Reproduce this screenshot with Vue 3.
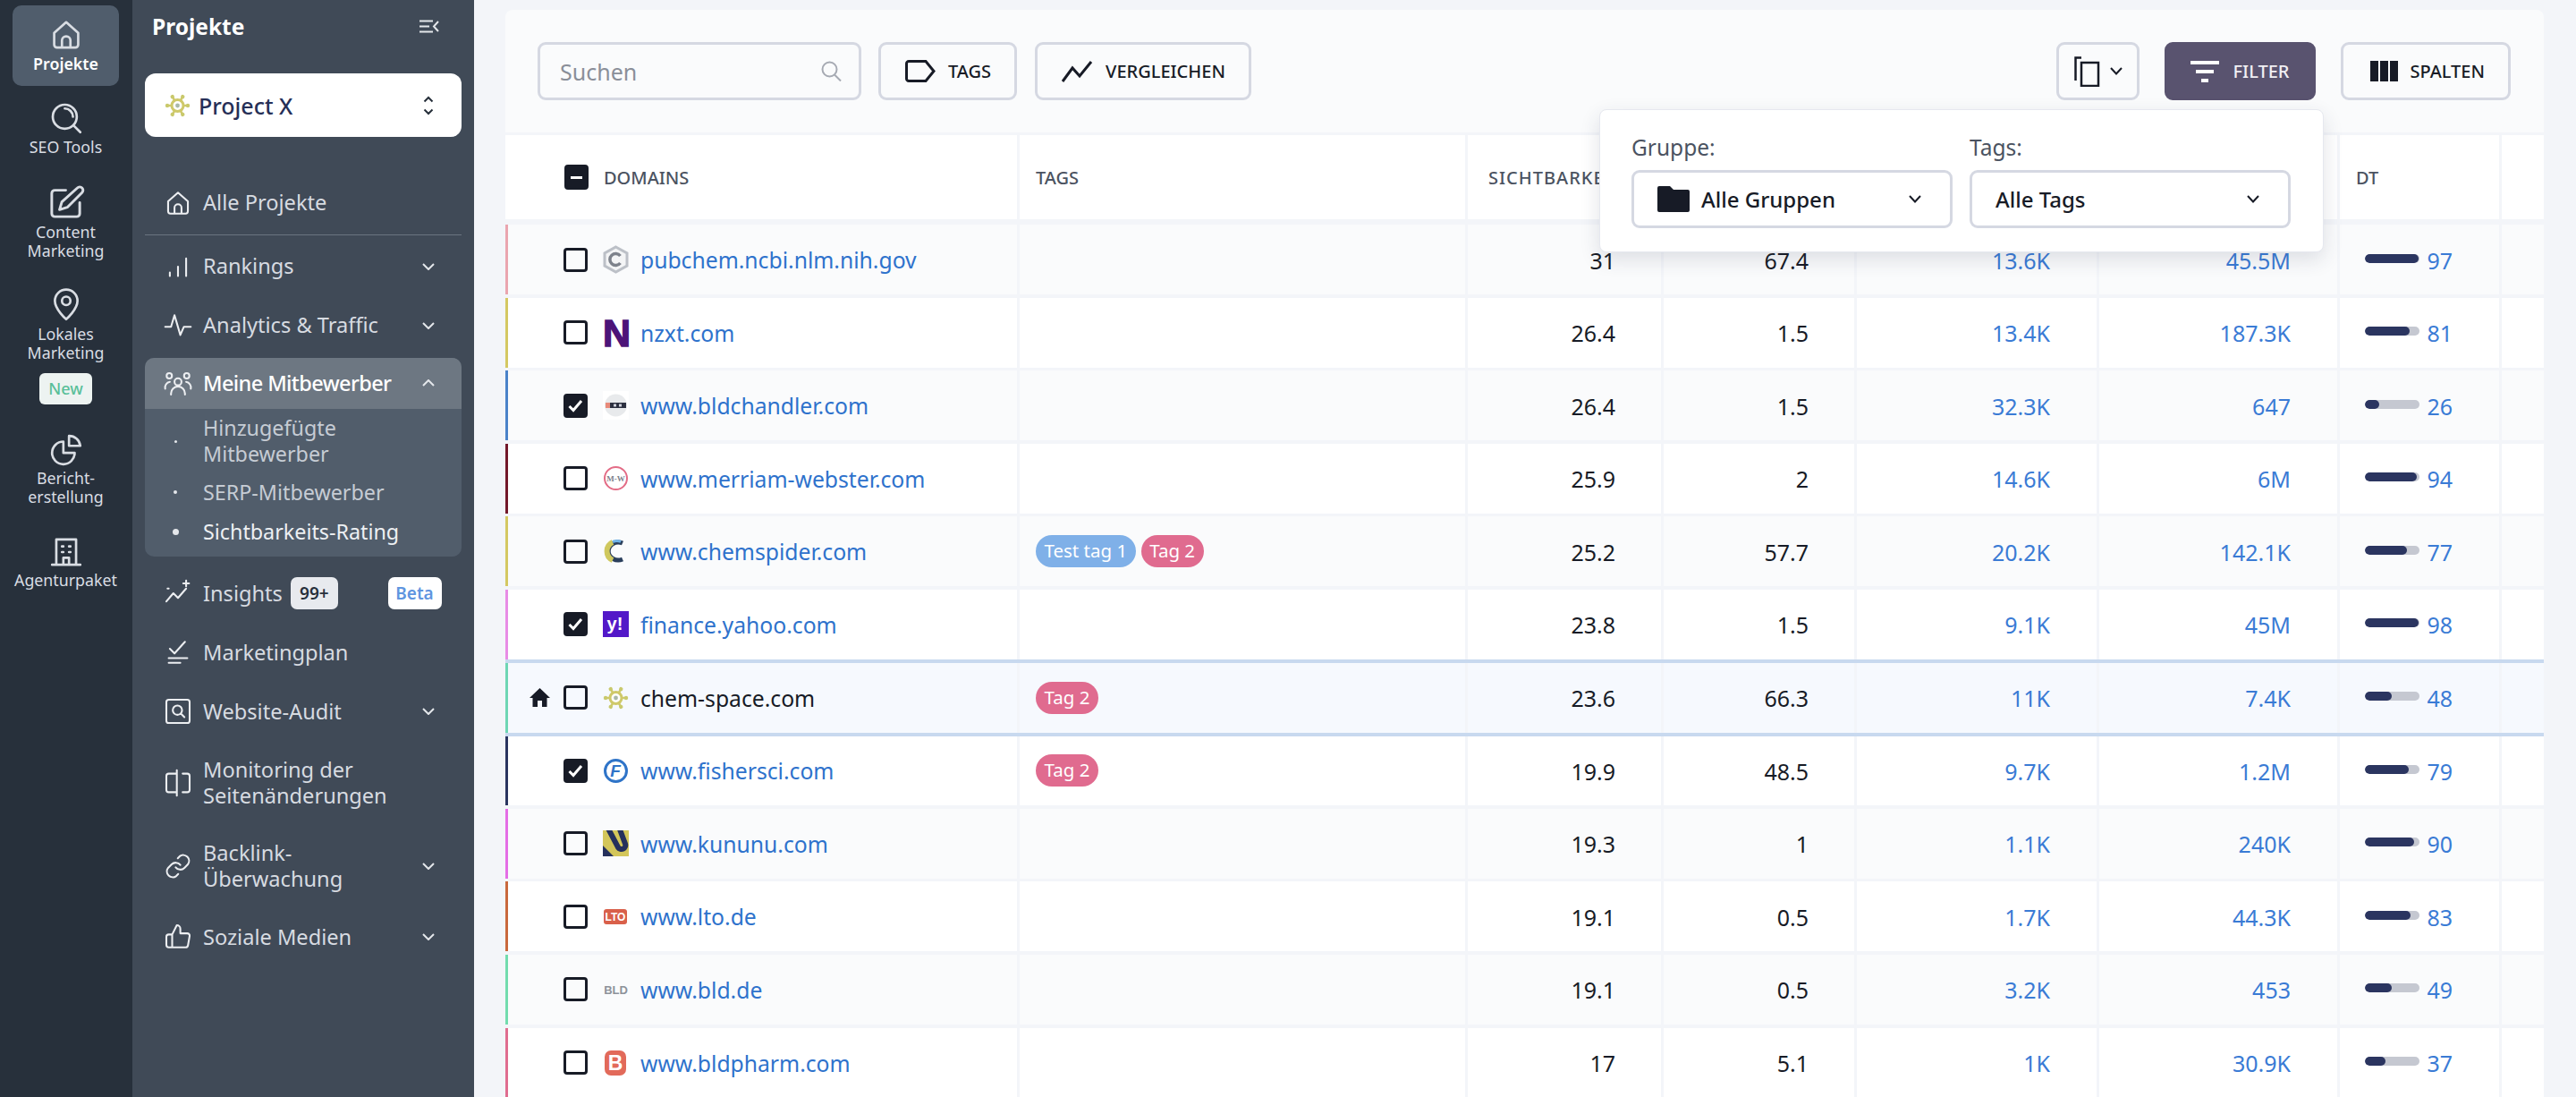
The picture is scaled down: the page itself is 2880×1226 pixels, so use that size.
<script setup>
const rail = [
  { label: ['Projekte'], active: true, d: 'M3.5 10.5 12 3l8.5 7.5V19a2 2 0 0 1-2 2h-13a2 2 0 0 1-2-2zM9 21v-5a3 3 0 0 1 6 0v5' },
  { label: ['SEO Tools'], d: 'M11 2.5a8.5 8.5 0 1 0 0 17 8.5 8.5 0 0 0 0-17zM11 5.2a5.8 5.8 0 0 1 5.8 5.8M17 17l5 5' },
  { label: ['Content', 'Marketing'], tall: true, d: 'M12 4H5a2 2 0 0 0-2 2v13a2 2 0 0 0 2 2h14a2 2 0 0 0 2-2v-7M19.5 2.5a2.1 2.1 0 0 1 3 3L13 15l-5 1.5 1.5-5z' },
  { label: ['Lokales', 'Marketing'], badge: 'New', d: 'M12 22s-8-7-8-13a8 8 0 0 1 16 0c0 6-8 13-8 13zM12 6a3 3 0 1 0 0 6 3 3 0 0 0 0-6z' },
  { label: ['Bericht-', 'erstellung'], d: 'M10 6a8 8 0 1 0 8 8h-8zM14 2v7h8a8 8 0 0 0-8-7z' },
  { label: ['Agenturpaket'], d: 'M5 21V3h14v18M2 21h20M9 8h1M14 8h1M9 12h1M14 12h1M10 21v-5h4v5' }
]
const navTop = [
  { label: ['Rankings'], chev: true, d: 'M5 20v-3M12 20v-8M19 20V5' },
  { label: ['Analytics & Traffic'], chev: true, d: 'M1 13h5l3-10 5 17 3-7h6' }
]
const sub = [
  { label: ['Hinzugefügte', 'Mitbewerber'], dot: 'small' },
  { label: ['SERP-Mitbewerber'], dot: 'mid' },
  { label: ['Sichtbarkeits-Rating'], dot: 'big', on: true }
]
const navBottom = [
  { label: ['Insights'], insights: true, d: 'M2 19l6-7 4 4 7-8M19 1v5M16.5 3.5h5M3 8h1' },
  { label: ['Marketingplan'], d: 'M5 9l4 4 9-10M4 17h16M4 21h10' },
  { label: ['Website-Audit'], chev: true, d: 'M4 2h16a2 2 0 0 1 2 2v16a2 2 0 0 1-2 2H4a2 2 0 0 1-2-2V4a2 2 0 0 1 2-2zM11.5 7a4 4 0 1 0 0 8 4 4 0 0 0 0-8zM14.5 14l3 3' },
  { label: ['Monitoring der', 'Seitenänderungen'], d: 'M11 1v22M11 4H4a2 2 0 0 0-2 2v12a2 2 0 0 0 2 2h7M16 4h4a2 2 0 0 1 2 2v12a2 2 0 0 1-2 2h-4' },
  { label: ['Backlink-', 'Überwachung'], chev: true, d: 'M10 13a5 5 0 0 0 7.5.5l3-3a5 5 0 0 0-7-7l-1.7 1.7M14 11a5 5 0 0 0-7.5-.5l-3 3a5 5 0 0 0 7 7l1.7-1.7' },
  { label: ['Soziale Medien'], chev: true, d: 'M7 10v11M2 12a2 2 0 0 1 2-2h3l4-8a3 3 0 0 1 3 3v4h6a2 2 0 0 1 2 2.3l-1.4 8a2 2 0 0 1-2 1.7H4a2 2 0 0 1-2-2z' }
]
const usersIcon = 'M12 8a3 3 0 1 0 0 6 3 3 0 0 0 0-6zM6 22v-1a6 6 0 0 1 12 0v1M4.5 3.5a2.3 2.3 0 1 0 0 4.6 2.3 2.3 0 0 0 0-4.6zM19.5 3.5a2.3 2.3 0 1 0 0 4.6 2.3 2.3 0 0 0 0-4.6zM1 17a5 5 0 0 1 4-6M23 17a5 5 0 0 0-4-6'
const rows = [
  { domain: 'pubchem.ncbi.nlm.nih.gov', logo: 'hex', bar: '#eaa5af', a: '31', b: '67.4', c: '13.6K', d: '45.5M', dt: 97 },
  { domain: 'nzxt.com', logo: 'n', bar: '#d4c862', a: '26.4', b: '1.5', c: '13.4K', d: '187.3K', dt: 81 },
  { domain: 'www.bldchandler.com', logo: 'bldc', bar: '#4a82c9', a: '26.4', b: '1.5', c: '32.3K', d: '647', dt: 26, checked: true },
  { domain: 'www.merriam-webster.com', logo: 'mw', bar: '#73182a', a: '25.9', b: '2', c: '14.6K', d: '6M', dt: 94 },
  { domain: 'www.chemspider.com', logo: 'cs', bar: '#d4c862', a: '25.2', b: '57.7', c: '20.2K', d: '142.1K', dt: 77, tags: ['t1', 't2'] },
  { domain: 'finance.yahoo.com', logo: 'y', bar: '#e88ce6', a: '23.8', b: '1.5', c: '9.1K', d: '45M', dt: 98, checked: true },
  { domain: 'chem-space.com', logo: 'chem', bar: '#6ed6b4', a: '23.6', b: '66.3', c: '11K', d: '7.4K', dt: 48, own: true, tags: ['t2'] },
  { domain: 'www.fishersci.com', logo: 'f', bar: '#2a3560', a: '19.9', b: '48.5', c: '9.7K', d: '1.2M', dt: 79, checked: true, tags: ['t2'] },
  { domain: 'www.kununu.com', logo: 'k', bar: '#e46de6', a: '19.3', b: '1', c: '1.1K', d: '240K', dt: 90 },
  { domain: 'www.lto.de', logo: 'lto', bar: '#c9683c', a: '19.1', b: '0.5', c: '1.7K', d: '44.3K', dt: 83 },
  { domain: 'www.bld.de', logo: 'bld', bar: '#72dcae', a: '19.1', b: '0.5', c: '3.2K', d: '453', dt: 49 },
  { domain: 'www.bldpharm.com', logo: 'b', bar: '#e06d90', a: '17', b: '5.1', c: '1K', d: '30.9K', dt: 37 }
]
const spokes = [0, 60, 120, 180, 240, 300]
</script>

<template>
  <div class="page">
    <aside class="rail">
      <div v-for="r in rail" :key="r.label[0]" class="rail-item" :class="{ active: r.active }">
        <svg class="rail-icon" :class="{ tall: r.tall }" viewBox="2.5 2.5 19 19"><path :d="r.d" /></svg>
        <span v-for="l in r.label" :key="l" class="rail-label">{{ l }}</span>
        <span v-if="r.badge" class="new">{{ r.badge }}</span>
      </div>
    </aside>

    <aside class="panel">
      <div class="panel-head">
        <span class="panel-title">Projekte</span>
        <svg class="collapse" viewBox="0 0 22 15"><path d="M0 1.5h15M0 7.5h11M0 13.5h15M21 2l-5 5.5 5 5.5" /></svg>
      </div>
      <div class="project">
        <svg class="project-logo" viewBox="0 0 29 26">
          <g v-for="s in spokes" :key="s" :transform="`rotate(${s} 14.5 13)`">
            <path class="spoke" d="M14.5 13H25" />
            <circle class="tip" cx="26" cy="13" r="2.2" />
          </g>
          <circle class="hub" cx="14.5" cy="13" r="6.5" />
          <circle class="hub-dot" cx="14.5" cy="13" r="2.4" />
        </svg>
        <span class="project-name">Project X</span>
        <svg class="updown" viewBox="0 0 12 22"><path d="M1.5 6.5 6 2l4.5 4.5M1.5 15.5 6 20l4.5-4.5" /></svg>
      </div>

      <div class="nav-row first">
        <svg class="nav-icon" viewBox="2 2 20 20"><path :d="rail[0].d" /></svg>
        <span class="nav-text">Alle Projekte</span>
      </div>
      <div class="divider"></div>

      <div v-for="n in navTop" :key="n.label[0]" class="nav-row">
        <svg class="nav-icon" viewBox="2 2 20 20"><path :d="n.d" /></svg>
        <span class="nav-text">{{ n.label[0] }}</span>
        <svg class="chev" viewBox="0 0 14 8"><path d="M1 1l6 6 6-6" /></svg>
      </div>

      <div class="group">
        <div class="group-head">
          <svg class="nav-icon" viewBox="2 2 20 20"><path :d="usersIcon" /></svg>
          <span class="nav-text strong">Meine Mitbewerber</span>
          <svg class="chev" viewBox="0 0 14 8"><path d="M1 7l6-6 6 6" /></svg>
        </div>
        <div class="group-list">
          <div v-for="s in sub" :key="s.label[0]" class="sub-row" :class="{ on: s.on }">
            <span class="dot-slot"><span class="dot" :class="s.dot"></span></span>
            <span class="sub-text"><span v-for="l in s.label" :key="l" class="line">{{ l }}</span></span>
          </div>
        </div>
      </div>

      <div class="nav-bottom">
        <div v-for="n in navBottom" :key="n.label[0]" class="nav-row" :class="{ double: n.label.length > 1 }">
          <svg class="nav-icon" viewBox="2 2 20 20"><path :d="n.d" /></svg>
          <span class="nav-text"><span v-for="l in n.label" :key="l" class="line">{{ l }}</span></span>
          <span v-if="n.insights" class="count">99+</span>
          <span v-if="n.insights" class="beta">Beta</span>
          <svg v-if="n.chev" class="chev" viewBox="0 0 14 8"><path d="M1 1l6 6 6-6" /></svg>
        </div>
      </div>
    </aside>

    <main class="main">
      <div class="card">
        <div class="toolbar">
          <div class="search">
            <span class="search-text">Suchen</span>
            <svg class="search-icon" viewBox="0 0 23 23"><path d="M9.5 1.5a8 8 0 1 0 0 16 8 8 0 0 0 0-16zM15 15.5l7 7" /></svg>
          </div>
          <div class="btn tag-btn">
            <svg class="ico-tag" viewBox="0 0 34 25"><path d="M4 1.5h19l9 11-9 11H4a2.5 2.5 0 0 1-2.5-2.5V4A2.5 2.5 0 0 1 4 1.5z" /></svg>
            <span>TAGS</span>
          </div>
          <div class="btn">
            <svg class="ico-cmp" viewBox="0 0 35 24"><path d="M1 23 12 8l8 9L33 1" /></svg>
            <span>VERGLEICHEN</span>
          </div>
          <div class="tool-right">
            <div class="btn copy">
              <svg class="ico-copy" viewBox="0 0 30 34"><path d="M9 33h19V7H9zM9 1.500H2.500V27" /></svg>
              <svg class="ico-down" viewBox="0 0 14 9"><path d="M1 1l6 6.500L13 1" /></svg>
            </div>
            <div class="btn filter">
              <span class="ico-filter"><i class="f1"></i><i class="f2"></i><i class="f3"></i></span>
              <span>FILTER</span>
            </div>
            <div class="btn cols">
              <span class="ico-cols"><i></i><i></i><i></i></span>
              <span>SPALTEN</span>
            </div>
          </div>
        </div>

        <div class="grid head">
          <div class="cell head-domain">
            <span class="cb minus"><i></i></span>
            <span class="h-text">DOMAINS</span>
          </div>
          <div class="cell head-pad"><span class="h-text">TAGS</span></div>
          <div class="cell head-wide"><span class="h-text spaced">SICHTBARKEIT</span></div>
          <div class="cell"></div>
          <div class="cell"></div>
          <div class="cell"></div>
          <div class="cell head-pad"><span class="h-text">DT</span></div>
          <div class="cell"></div>
        </div>

        <div class="rows">
          <div v-for="(r, i) in rows" :key="r.domain" class="grid row" :class="{ odd: i % 2 === 0, own: r.own }">
            <div class="cell domain" :style="{ borderLeftColor: r.bar }">
              <span class="home-slot">
                <svg v-if="r.own" class="home" viewBox="0 0 23 21"><path d="M11.500 0 23 11h-3.500v10h-5.500v-7H9v7H3.500V11H0z" /></svg>
              </span>
              <span class="cb" :class="{ checked: r.checked }">
                <svg v-if="r.checked" viewBox="0 0 21 21"><path d="M3.500 11l4.500 4.500L17 5" /></svg>
              </span>
              <span class="logo">
                <svg v-if="r.logo === 'hex'" viewBox="0 0 29 32"><path d="M14.500 2 27 9v14l-12.500 7L2 23V9z" fill="#f4f5f6" stroke="#bcc0c7" stroke-width="3" /><path d="M19.500 12a6.500 6.500 0 1 0 0 8" fill="none" stroke="#7d828b" stroke-width="3.500" /></svg>
                <span v-else-if="r.logo === 'n'" class="n-mark">N</span>
                <svg v-else-if="r.logo === 'bldc'" viewBox="0 0 29 32"><rect width="29" height="32" fill="#fff" /><circle cx="14.500" cy="16" r="12.500" fill="#e8eaec" /><rect x="3" y="13" width="5" height="6" fill="#e88a7a" /><rect x="8" y="13" width="18" height="6" fill="#2c3040" /><rect x="12" y="14.500" width="3" height="3" fill="#cfd2dc" /><rect x="18" y="14.500" width="3" height="3" fill="#cfd2dc" /></svg>
                <svg v-else-if="r.logo === 'mw'" viewBox="0 0 29 32"><circle cx="14.500" cy="15.500" r="12.500" fill="#fff" stroke="#e36c86" stroke-width="2" /><text class="mw-letter" x="14.500" y="18.500">M-W</text></svg>
                <svg v-else-if="r.logo === 'cs'" viewBox="0 0 29 32"><path d="M22 7a11 10 0 1 0 0 18" fill="none" stroke="#2a3f5c" stroke-width="5" /><path d="M11 6a11 11 0 0 0 0 20" fill="none" stroke="#cfc85e" stroke-width="6" /><path d="M11 5.500q5-2 9 0" fill="none" stroke="#6fb3e8" stroke-width="3" /></svg>
                <svg v-else-if="r.logo === 'y'" viewBox="0 0 29 29"><rect width="29" height="29" fill="#5318c8" /><text class="y-letter" x="13.500" y="21">y!</text></svg>
                <svg v-else-if="r.logo === 'chem'" viewBox="0 0 29 26">
                  <g v-for="s in spokes" :key="s" :transform="`rotate(${s} 14.500 13)`">
                    <path class="spoke" d="M14.500 13H25" />
                    <circle class="tip" cx="26" cy="13" r="2.200" />
                  </g>
                  <circle class="hub" cx="14.500" cy="13" r="6.500" />
                  <circle class="hub-dot" cx="14.500" cy="13" r="2.400" />
                </svg>
                <svg v-else-if="r.logo === 'f'" viewBox="0 0 29 29"><circle cx="14.500" cy="14.500" r="12" fill="#fff" stroke="#2f74c8" stroke-width="3" /><text class="f-letter" x="14" y="21">F</text></svg>
                <svg v-else-if="r.logo === 'k'" viewBox="0 0 29 29"><rect width="29" height="29" fill="#d3c65a" /><path d="M0 17 12 29H0z" fill="#25305c" /><path d="M6-2l11 21a4.500 4.500 0 0 0 8-4L19-1" fill="none" stroke="#25305c" stroke-width="6" /></svg>
                <svg v-else-if="r.logo === 'lto'" viewBox="0 0 29 19"><rect x="1" y="1" width="26" height="17" rx="3" fill="#d9604a" /><text class="lto-letter" x="14" y="14">LTO</text></svg>
                <svg v-else-if="r.logo === 'bld'" viewBox="0 0 29 14"><text class="bld-letter" x="14.500" y="12">BLD</text></svg>
                <svg v-else viewBox="0 0 29 30"><rect x="2" y="1" width="24" height="28" rx="7" fill="#e26a5a" /><text class="b-letter" x="14" y="23">B</text></svg>
              </span>
              <span class="dom" :class="{ dark: r.own }">{{ r.domain }}</span>
            </div>
            <div class="cell tags">
              <template v-for="t in r.tags" :key="t">
                <span v-if="t === 't1'" class="tag blue">Test tag 1</span>
                <span v-else class="tag pink">Tag 2</span>
              </template>
            </div>
            <div class="cell num plain">{{ r.a }}</div>
            <div class="cell num plain">{{ r.b }}</div>
            <div class="cell num link">{{ r.c }}</div>
            <div class="cell num link">{{ r.d }}</div>
            <div class="cell num link dt">
              <span class="track"><span class="fill" :style="{ width: r.dt + '%' }"></span></span>
              <span>{{ r.dt }}</span>
            </div>
            <div class="cell"></div>
          </div>
        </div>

        <div class="popover">
          <div class="pop-col">
            <span class="pop-label">Gruppe:</span>
            <div class="select">
              <svg class="folder" viewBox="0 0 36 29"><path d="M2 0h12l4 4h16a2 2 0 0 1 2 2v21a2 2 0 0 1-2 2H2a2 2 0 0 1-2-2V2a2 2 0 0 1 2-2z" /></svg>
              <span class="sel-text">Alle Gruppen</span>
              <svg class="ico-down sel-down" viewBox="0 0 14 9"><path d="M1 1l6 6.500L13 1" /></svg>
            </div>
          </div>
          <div class="pop-col">
            <span class="pop-label">Tags:</span>
            <div class="select">
              <span class="sel-text">Alle Tags</span>
              <svg class="ico-down sel-down" viewBox="0 0 14 9"><path d="M1 1l6 6.500L13 1" /></svg>
            </div>
          </div>
        </div>
      </div>
    </main>
  </div>
</template>

<style>
html, body { margin: 0; height: 1226px; overflow: hidden; background: #f3f5f9; }
</style>

<style scoped>
.page { display: flex; height: 1226px; overflow: hidden; font-family: "Noto Sans", "Open Sans", sans-serif; color: #171b26; background: #f3f5f9; }

/* rail */
.rail { width: 148px; flex: none; background: #27303b; display: flex; flex-direction: column; gap: 3px; padding: 6px 15px 0 14px; box-sizing: border-box; }
.rail-item { display: flex; flex-direction: column; align-items: center; padding: 18px 0 14.5px; border-radius: 10px; }
.rail-item.active { background: #505d6c; }
.rail-icon { width: 30px; height: 30px; margin-bottom: 6.5px; overflow: visible; fill: none; stroke: #d9dde3; stroke-width: 1.700; stroke-linecap: round; stroke-linejoin: round; }
.rail-icon.tall { height: 33px; margin-bottom: 5.500px; width: 33px; }
.rail-label { font-size: 17.800px; line-height: 21px; color: #d9dde3; white-space: nowrap; }
.active .rail-label { color: #fff; font-weight: 600; }
.new { margin-top: 12.500px; width: 59px; height: 35px; border-radius: 6px; background: #edf3f1; color: #59bf99; font-size: 18px; line-height: 35px; text-align: center; font-weight: 500; }

/* panel */
.panel { width: 382px; flex: none; background: #404a57; box-sizing: border-box; padding: 0 14.500px 0 14px; }
.panel-head { height: 58px; display: flex; align-items: center; justify-content: space-between; padding: 0 25px 0 8px; }
.panel-title { font-size: 24.500px; font-weight: 700; color: #fff; }
.collapse { width: 22px; height: 15px; fill: none; stroke: #e4e7eb; stroke-width: 2; }
.project { margin-top: 24px; height: 71px; background: #fff; border-radius: 12px; display: flex; align-items: center; padding: 0 31px 0 22px; }
.project-logo { width: 29px; height: 26px; flex: none; }
.spoke { stroke: #cfc96a; stroke-width: 2.500; }
.tip { fill: #c9c96c; }
.hub { fill: #fff; stroke: #cfc96a; stroke-width: 3; }
.hub-dot { fill: #a9b8a8; }
.project-name { margin-left: 9px; font-size: 25px; font-weight: 500; color: #262f57; flex: 1; }
.updown { width: 12px; height: 22px; fill: none; stroke: #262f3a; stroke-width: 2; }
.nav-row { display: flex; align-items: center; min-height: 66px; padding: 0 30px 0 24px; box-sizing: border-box; }
.nav-row.first { margin-top: 40.500px; }
.nav-row.double { padding-top: 17.500px; padding-bottom: 17.500px; }
.divider { height: 1px; background: #6a7480; margin: 2px 0 2px; }
.nav-icon { width: 26px; height: 26px; flex: none; margin-right: 15px; overflow: visible; fill: none; stroke: #eceef1; stroke-width: 1.600; stroke-linecap: round; stroke-linejoin: round; }
.nav-text { font-size: 23.600px; line-height: 29px; color: #d7dbe1; flex: none; }
.nav-text.strong { color: #fff; font-weight: 500; font-size: 23.500px; letter-spacing: -0.600px; }
.line { display: block; white-space: nowrap; }
.chev { width: 14px; height: 8px; margin-left: auto; flex: none; fill: none; stroke: #e4e7eb; stroke-width: 2; }
.group { margin-top: 3px; border-radius: 10px; overflow: hidden; background: #515d6b; height: 222.600px; }
.group-head { display: flex; align-items: center; height: 57px; padding: 0 30px 0 24px; background: #6d7782; }
.group-list { padding-top: 7.500px; }
.sub-row { display: flex; align-items: center; min-height: 44px; padding-left: 30px; }
.sub-row:first-child { margin-bottom: 6px; }
.dot-slot { width: 8px; flex: none; display: flex; justify-content: center; }
.sub-text { margin-left: 27px; font-size: 23.300px; line-height: 29px; color: #c6ccd4; }
.sub-row.on .sub-text { color: #edf0f3; }
.dot { border-radius: 50%; background: #e4e7eb; flex: none; }
.dot.small { width: 3px; height: 3px; }
.dot.mid { width: 4px; height: 4px; }
.dot.big { width: 7px; height: 7px; }
.nav-bottom { margin-top: 8px; }
.count { margin-left: 9px; width: 53px; height: 36px; border-radius: 7px; background: #e8eaee; color: #27303b; font-size: 19px; font-weight: 600; line-height: 36px; text-align: center; flex: none; }
.beta { margin-left: auto; margin-right: -8px; width: 60px; height: 36px; border-radius: 7px; background: #fff; color: #5f95e0; font-size: 19px; font-weight: 600; line-height: 36px; text-align: center; flex: none; }

/* main */
.main { flex: 1; min-width: 0; padding: 11px 36px 0 35px; box-sizing: border-box; }
.card { position: relative; height: 1215px; overflow: hidden; }
.toolbar { height: 137px; background: #fafbfc; border-radius: 8px 8px 0 0; margin-bottom: 3px; box-sizing: border-box; padding: 36px 37px 0 36px; display: flex; gap: 20px; align-items: flex-start; }
.search { width: 362px; height: 65px; box-sizing: border-box; border: 3px solid #d5d8e2; border-radius: 9px; display: flex; align-items: center; justify-content: space-between; padding: 0 19px 0 22px; }
.search-text { font-size: 25px; color: #8a8f99; }
.search-icon { width: 23px; height: 23px; fill: none; stroke: #a6aab3; stroke-width: 2; }
.btn { height: 65px; box-sizing: border-box; border: 3px solid #d5d8e2; border-radius: 9px; display: flex; align-items: center; gap: 14px; padding: 0 26px 0 27px; font-size: 20px; font-weight: 500; color: #171b26; white-space: nowrap; }
.tag-btn { margin-left: -1px; }
.ico-tag { width: 34px; height: 25px; fill: none; stroke: #171b26; stroke-width: 3; }
.ico-cmp { width: 35px; height: 24px; fill: none; stroke: #171b26; stroke-width: 3; }
.tool-right { margin-left: auto; display: flex; gap: 28px; }
.copy { padding: 0 16px; gap: 11px; }
.ico-copy { width: 30px; height: 34px; fill: none; stroke: #171b26; stroke-width: 2.500; }
.ico-down { width: 14px; height: 9px; fill: none; stroke: #171b26; stroke-width: 2; }
.filter { background: #59536f; border-color: #59536f; color: #f1f0f4; width: 169px; gap: 16px; padding: 0 0 0 26px; }
.cols { padding: 0 26px 0 30px; }
.ico-filter { display: flex; flex-direction: column; align-items: center; gap: 6px; width: 32px; }
.ico-filter i { display: block; height: 4px; background: #fff; }
.f1 { width: 32px; } .f2 { width: 20px; } .f3 { width: 8px; }
.ico-cols { display: flex; gap: 2px; width: 31px; height: 23px; }
.ico-cols i { flex: 1; background: #171b26; display: block; }

/* table */
.grid { display: grid; grid-template-columns: 572px 498px 216px 213px 268px 266px 178px 47px; column-gap: 3px; }
.head { height: 94px; margin-bottom: 6px; }
.head .cell { background: #fff; display: flex; align-items: center; overflow: hidden; }
.head-domain { padding-left: 66px; gap: 17px; }
.head-pad { padding-left: 18px; }
.head-wide { padding-left: 23px; }
.h-text { font-size: 20px; font-weight: 500; color: #4b5361; white-space: nowrap; }
.spaced { letter-spacing: 1px; }
.rows { display: flex; flex-direction: column; gap: 3.600px; }
.row { height: 78px; }
.row .cell { background: #fff; }
.row.odd .cell { background: #fafbfc; }
.row.own { position: relative; z-index: 1; box-shadow: 0 -4px 0 #c8d9ef, 0 4px 0 #c8d9ef; }
.row.own .cell { background: #f6f9fe; }
.domain { border-left: 3px solid transparent; display: flex; align-items: center; padding-left: 24px; }
.home-slot { width: 38px; flex: none; display: flex; }
.home { width: 23px; height: 21px; fill: #171b26; }
.cb { width: 27px; height: 27px; flex: none; box-sizing: border-box; border: 3px solid #171b26; border-radius: 4px; display: flex; align-items: center; justify-content: center; }
.cb.checked, .cb.minus { background: #171b26; }
.cb svg { width: 21px; height: 21px; fill: none; stroke: #fff; stroke-width: 3; }
.minus { height: 28px; }
.minus i { display: block; width: 13px; height: 3px; background: #fff; }
.logo { width: 29px; height: 32px; margin: 0 13px 0 17px; flex: none; display: flex; align-items: center; }
.logo svg { width: 29px; display: block; }
.n-mark { display: block; width: 29px; height: 32px; font: 700 43px/32px "Liberation Sans", sans-serif; color: #4c1478; text-align: center; -webkit-text-stroke: 1.500px #4c1478; }
.mw-letter { font: 700 9px "Liberation Serif", serif; fill: #7d828b; text-anchor: middle; }
.y-letter { font: 900 20px "Liberation Sans", sans-serif; fill: #fff; text-anchor: middle; }
.f-letter { font: italic 700 19px "Liberation Sans", sans-serif; fill: #2f74c8; text-anchor: middle; }
.lto-letter { font: 700 12px "Liberation Sans", sans-serif; fill: #fff; text-anchor: middle; }
.bld-letter { font: 700 13px "Liberation Sans", sans-serif; fill: #8d929a; text-anchor: middle; }
.b-letter { font: 900 23px "Liberation Sans", sans-serif; fill: #fff; text-anchor: middle; }
.dom { font-size: 24.700px; color: #2e72cc; white-space: nowrap; padding-top: 1px; }
.dom.dark { color: #171b26; }
.tags { display: flex; align-items: center; gap: 6px; padding-left: 18px; }
.tag { height: 36px; line-height: 34px; border-radius: 18px; color: #fff; font-size: 20.500px; padding: 0 9.500px; white-space: nowrap; }
.tag.blue { background: #7fb0e8; }
.tag.pink { background: #e06b8f; }
.num { display: flex; align-items: center; justify-content: flex-end; padding-right: 52px; padding-top: 1px; font-size: 25px; }
.num.plain { padding-right: 51px; }
.link { color: #3a7bd5; }
.dt { gap: 8px; }
.track { width: 61px; height: 10px; border-radius: 5px; background: #c5c8d1; overflow: hidden; display: block; margin-top: -4px; }
.fill { display: block; height: 100%; border-radius: 5px; background: #2b3560; }

/* popover */
.popover { position: absolute; left: 1223px; top: 111px; width: 810px; height: 160px; box-sizing: border-box; background: #fff; border: 1px solid #e6e8ef; border-radius: 8px; box-shadow: 0 8px 22px rgba(40, 50, 80, .14); padding: 24px 35px 0; display: flex; gap: 19px; z-index: 5; }
.pop-col { display: flex; flex-direction: column; width: 359px; }
.pop-label { font-size: 24.500px; line-height: 36px; color: #4b5361; margin-bottom: 7px; }
.select { height: 65px; box-sizing: border-box; border: 3px solid #d5d8e2; border-radius: 9px; display: flex; align-items: center; padding: 0 32px 0 26px; }
.folder { width: 36px; height: 29px; fill: #171b26; margin-right: 13px; flex: none; }
.sel-text { font-size: 24px; font-weight: 500; color: #171b26; flex: 1; }
.sel-down { flex: none; }
</style>
